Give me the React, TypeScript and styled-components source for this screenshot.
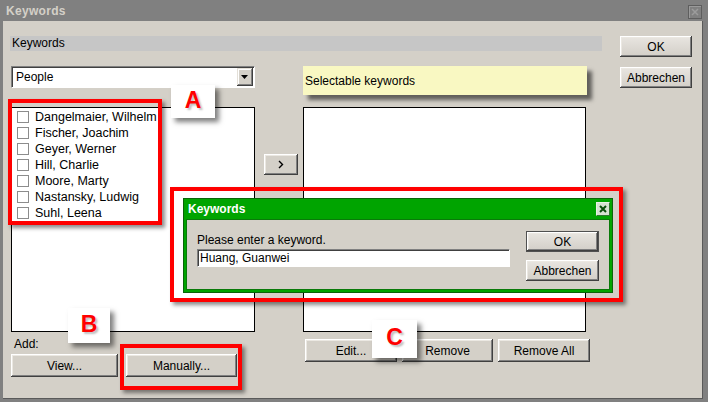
import React from 'react';
import styled, { createGlobalStyle } from 'styled-components';

const GlobalStyle = createGlobalStyle`
  html, body {
    margin: 0;
    padding: 0;
    background: #808080;
  }
  body {
    font-family: "Liberation Sans", Arial, sans-serif;
    font-size: 12px;
    color: #000;
  }
`;

const Window = styled.div`
  position: relative;
  width: 708px;
  height: 402px;
  box-sizing: border-box;
  padding: 0 5px 3px 3px;
  background: #808080;
  display: flex;
  flex-direction: column;
  overflow: hidden;
`;

const TitleBar = styled.div`
  height: 21px;
  display: flex;
  align-items: center;
  justify-content: space-between;
  padding: 0 1px 0 3px;
  color: #d4d0c8;
  font-weight: bold;
  font-size: 12px;
  letter-spacing: 0.3px;
`;

const GreyClose = styled.div`
  width: 14px;
  height: 14px;
  box-sizing: border-box;
  margin-top: 3px;
  border: 1px solid #5e5e5e;
  box-shadow: inset 1px 1px #9a9a9a;
  display: flex;
  align-items: center;
  justify-content: center;
`;

const Body = styled.div`
  flex: 1;
  display: flex;
  padding: 15px 0 0 7px;
  background: #d4d0c8;
  border-right: 1px solid #5a5a5a;
  border-bottom: 1px solid #5a5a5a;
`;

const Main = styled.div`
  width: 592px;
  display: flex;
  flex-direction: column;
`;

const LabelBar = styled.div`
  height: 15px;
  line-height: 15px;
  padding-left: 2px;
  background: #c6c6c6;
`;

const Grid = styled.div`
  margin: 15px 0 0 1px;
  display: grid;
  grid-template-columns: 244px 48px 283px;
  grid-template-rows: 41px 225px auto;
`;

const Dropdown = styled.div`
  height: 22px;
  box-sizing: border-box;
  background: #fff;
  border-top: 1px solid #808080;
  border-left: 1px solid #808080;
  border-right: 1px solid #fff;
  border-bottom: 1px solid #fff;
  box-shadow: inset 1px 1px #404040;
  display: flex;
  align-items: center;
  padding: 1px 1px 1px 4px;
`;

const DropdownText = styled.span`
  flex: 1;
`;

const ArrowButton = styled.div`
  width: 16px;
  height: 18px;
  box-sizing: border-box;
  background: #d4d0c8;
  box-shadow: inset -1px -1px #404040, inset 1px 1px #e4e0d8, inset -2px -2px #808080, inset 2px 2px #fff;
  display: flex;
  align-items: center;
  justify-content: center;
`;

const NoteLabel = styled.div`
  width: 284px;
  height: 29px;
  box-sizing: border-box;
  padding-left: 2px;
  background: #f9f8c2;
  display: flex;
  align-items: center;
  box-shadow: 5px 5px 4px rgba(0, 0, 0, 0.55);
`;

const ListBox = styled.div`
  box-sizing: border-box;
  background: #fff;
  border: 1px solid #000;
  padding-top: 1px;
`;

const ItemRow = styled.div`
  height: 16px;
  display: flex;
  align-items: center;
  padding-left: 5px;
  white-space: nowrap;
  font-size: 12.5px;
`;

const Check = styled.span`
  width: 12px;
  height: 12px;
  box-sizing: border-box;
  border: 1px solid #8c8c8c;
  background: #fff;
  margin-right: 6px;
  flex-shrink: 0;
`;

const MiddleCol = styled.div`
  padding: 47px 0 0 9px;
`;

const Button = styled.button<{ $w: number; $h?: number; $shiny?: boolean; $default?: boolean }>`
  width: ${(p) => p.$w}px;
  height: ${(p) => p.$h ?? 23}px;
  flex-shrink: 0;
  box-sizing: border-box;
  padding: 0;
  font-family: "Liberation Sans", Arial, sans-serif;
  font-size: 12px;
  color: #000;
  border: ${(p) => (p.$default ? '1px solid #505050' : 'none')};
  background: ${(p) => (p.$shiny ? 'linear-gradient(#e9e6e1, #d2cec7)' : '#d4d0c8')};
  box-shadow: inset -1px -1px #404040, inset 1px 1px #fff, inset -2px -2px #808080, inset 2px 2px #ebe8e2;
  display: flex;
  align-items: center;
  justify-content: center;
`;

const AddBlock = styled.div`
  display: flex;
  flex-direction: column;
`;

const AddLabel = styled.div`
  height: 14px;
  line-height: 14px;
  margin: 5px 0 3px 3px;
`;

const ButtonRow = styled.div<{ $gap: number }>`
  display: flex;
  gap: ${(p) => p.$gap}px;
`;

const RightButtons = styled(ButtonRow)`
  grid-column: 3;
  margin: 7px 0 0 2px;
`;

const Side = styled.div`
  margin-left: 18px;
  display: flex;
  flex-direction: column;
  gap: 10px;
`;

/* annotations lying over the screenshot */

const Highlight = styled.div<{ $x: number; $y: number; $w: number; $h: number }>`
  position: absolute;
  left: ${(p) => p.$x}px;
  top: ${(p) => p.$y}px;
  width: ${(p) => p.$w}px;
  height: ${(p) => p.$h}px;
  box-sizing: border-box;
  border: 4px solid #ff0000;
  box-shadow: 3px 3px 4px rgba(0, 0, 0, 0.45);
`;

const DialogFrame = styled(Highlight)`
  padding: 7px 6px 5px 9px;
`;

const Tag = styled.div<{ $x: number; $y: number; $w: number; $h: number }>`
  position: absolute;
  left: ${(p) => p.$x}px;
  top: ${(p) => p.$y}px;
  width: ${(p) => p.$w}px;
  height: ${(p) => p.$h}px;
  background: #fff;
  box-shadow: 4px 4px 5px rgba(0, 0, 0, 0.5);
  display: flex;
  align-items: center;
  justify-content: center;
  padding-bottom: 3px;
  box-sizing: border-box;
  color: #ff0000;
  font-family: "Liberation Sans", Arial, sans-serif;
  font-weight: bold;
  font-size: 23px;
  text-shadow: 2px 2px 2px rgba(0, 0, 0, 0.25);
`;

const Dialog = styled.div`
  height: 100%;
  box-sizing: border-box;
  border: 1px solid #0a640a;
  background: #00a400;
  padding: 0 2px 2px 2px;
  display: flex;
  flex-direction: column;
`;

const DialogTitle = styled.div`
  height: 20px;
  display: flex;
  align-items: center;
  justify-content: space-between;
  padding: 0 0 0 2px;
  color: #fff;
  font-weight: bold;
  font-size: 12px;
`;

const GreenClose = styled.div`
  width: 14px;
  height: 14px;
  box-sizing: border-box;
  background: #d6e2d2;
  border: 1px solid #e8f2e4;
  border-right-color: #2f7a2f;
  border-bottom-color: #2f7a2f;
  display: flex;
  align-items: center;
  justify-content: center;
`;

const DialogBody = styled.div`
  flex: 1;
  background: #d4d0c8;
  border: 1px solid #0a7a0a;
  display: flex;
  padding: 11px 0 0 10px;
  gap: 16px;
`;

const Prompt = styled.div`
  display: flex;
  flex-direction: column;
  padding-top: 2px;
`;

const PromptText = styled.div`
  height: 14px;
  line-height: 14px;
  margin-bottom: 2px;
`;

const TextInput = styled.div`
  width: 313px;
  height: 18px;
  box-sizing: border-box;
  background: #fff;
  border-top: 1px solid #808080;
  border-left: 1px solid #808080;
  border-right: 1px solid #fff;
  border-bottom: 1px solid #fff;
  box-shadow: inset 1px 1px #404040;
  padding-left: 2px;
  display: flex;
  align-items: center;
`;

const DialogButtons = styled.div`
  display: flex;
  flex-direction: column;
  gap: 8px;
`;

const people = [
  'Dangelmaier, Wilhelm',
  'Fischer, Joachim',
  'Geyer, Werner',
  'Hill, Charlie',
  'Moore, Marty',
  'Nastansky, Ludwig',
  'Suhl, Leena',
];

const App: React.FC = () => (
  <>
    <GlobalStyle />
    <Window>
      <TitleBar>
        <span>Keywords</span>
        <GreyClose>
          <svg width="8" height="8" viewBox="0 0 8 8">
            <path d="M1 1 L7 7 M7 1 L1 7" stroke="#9c9c9c" strokeWidth="1.5" />
          </svg>
        </GreyClose>
      </TitleBar>
      <Body>
        <Main>
          <LabelBar>Keywords</LabelBar>
          <Grid>
            <Dropdown>
              <DropdownText>People</DropdownText>
              <ArrowButton>
                <svg width="8" height="5" viewBox="0 0 8 5">
                  <path d="M0 0 H7 L3.5 4 Z" fill="#000" />
                </svg>
              </ArrowButton>
            </Dropdown>
            <div />
            <NoteLabel>Selectable keywords</NoteLabel>

            <ListBox>
              {people.map((name) => (
                <ItemRow key={name}>
                  <Check />
                  {name}
                </ItemRow>
              ))}
            </ListBox>
            <MiddleCol>
              <Button $w={34} $h={21}>
                <svg width="6" height="9" viewBox="0 0 6 9">
                  <path d="M1 1 L4.5 4.5 L1 8" stroke="#000" strokeWidth="1.4" fill="none" />
                </svg>
              </Button>
            </MiddleCol>
            <ListBox />

            <AddBlock>
              <AddLabel>Add:</AddLabel>
              <ButtonRow $gap={8}>
                <Button $w={107}>View...</Button>
                <Button $w={111}>Manually...</Button>
              </ButtonRow>
            </AddBlock>
            <RightButtons $gap={5}>
              <Button $w={92}>Edit...</Button>
              <Button $w={91}>Remove</Button>
              <Button $w={92}>Remove All</Button>
            </RightButtons>
          </Grid>
        </Main>
        <Side>
          <Button $w={72} $h={21} $shiny>OK</Button>
          <Button $w={72} $h={21} $shiny>Abbrechen</Button>
        </Side>
      </Body>

      <Highlight $x={8} $y={99} $w={154} $h={126} />
      <Tag $x={171} $y={85} $w={44} $h={33}>A</Tag>

      <DialogFrame $x={170} $y={187} $w={453} $h={115}>
        <Dialog>
          <DialogTitle>
            <span>Keywords</span>
            <GreenClose>
              <svg width="8" height="8" viewBox="0 0 8 8">
                <path d="M1 1 L7 7 M7 1 L1 7" stroke="#0b4d0b" strokeWidth="2" />
              </svg>
            </GreenClose>
          </DialogTitle>
          <DialogBody>
            <Prompt>
              <PromptText>Please enter a keyword.</PromptText>
              <TextInput>Huang, Guanwei</TextInput>
            </Prompt>
            <DialogButtons>
              <Button $w={73} $h={21} $shiny $default>OK</Button>
              <Button $w={73} $h={21} $shiny>Abbrechen</Button>
            </DialogButtons>
          </DialogBody>
        </Dialog>
      </DialogFrame>

      <Highlight $x={120} $y={344} $w={122} $h={46} />
      <Tag $x={68} $y={308} $w={42} $h={35}>B</Tag>
      <Tag $x={372} $y={320} $w={45} $h={38}>C</Tag>
    </Window>
  </>
);

export default App;
